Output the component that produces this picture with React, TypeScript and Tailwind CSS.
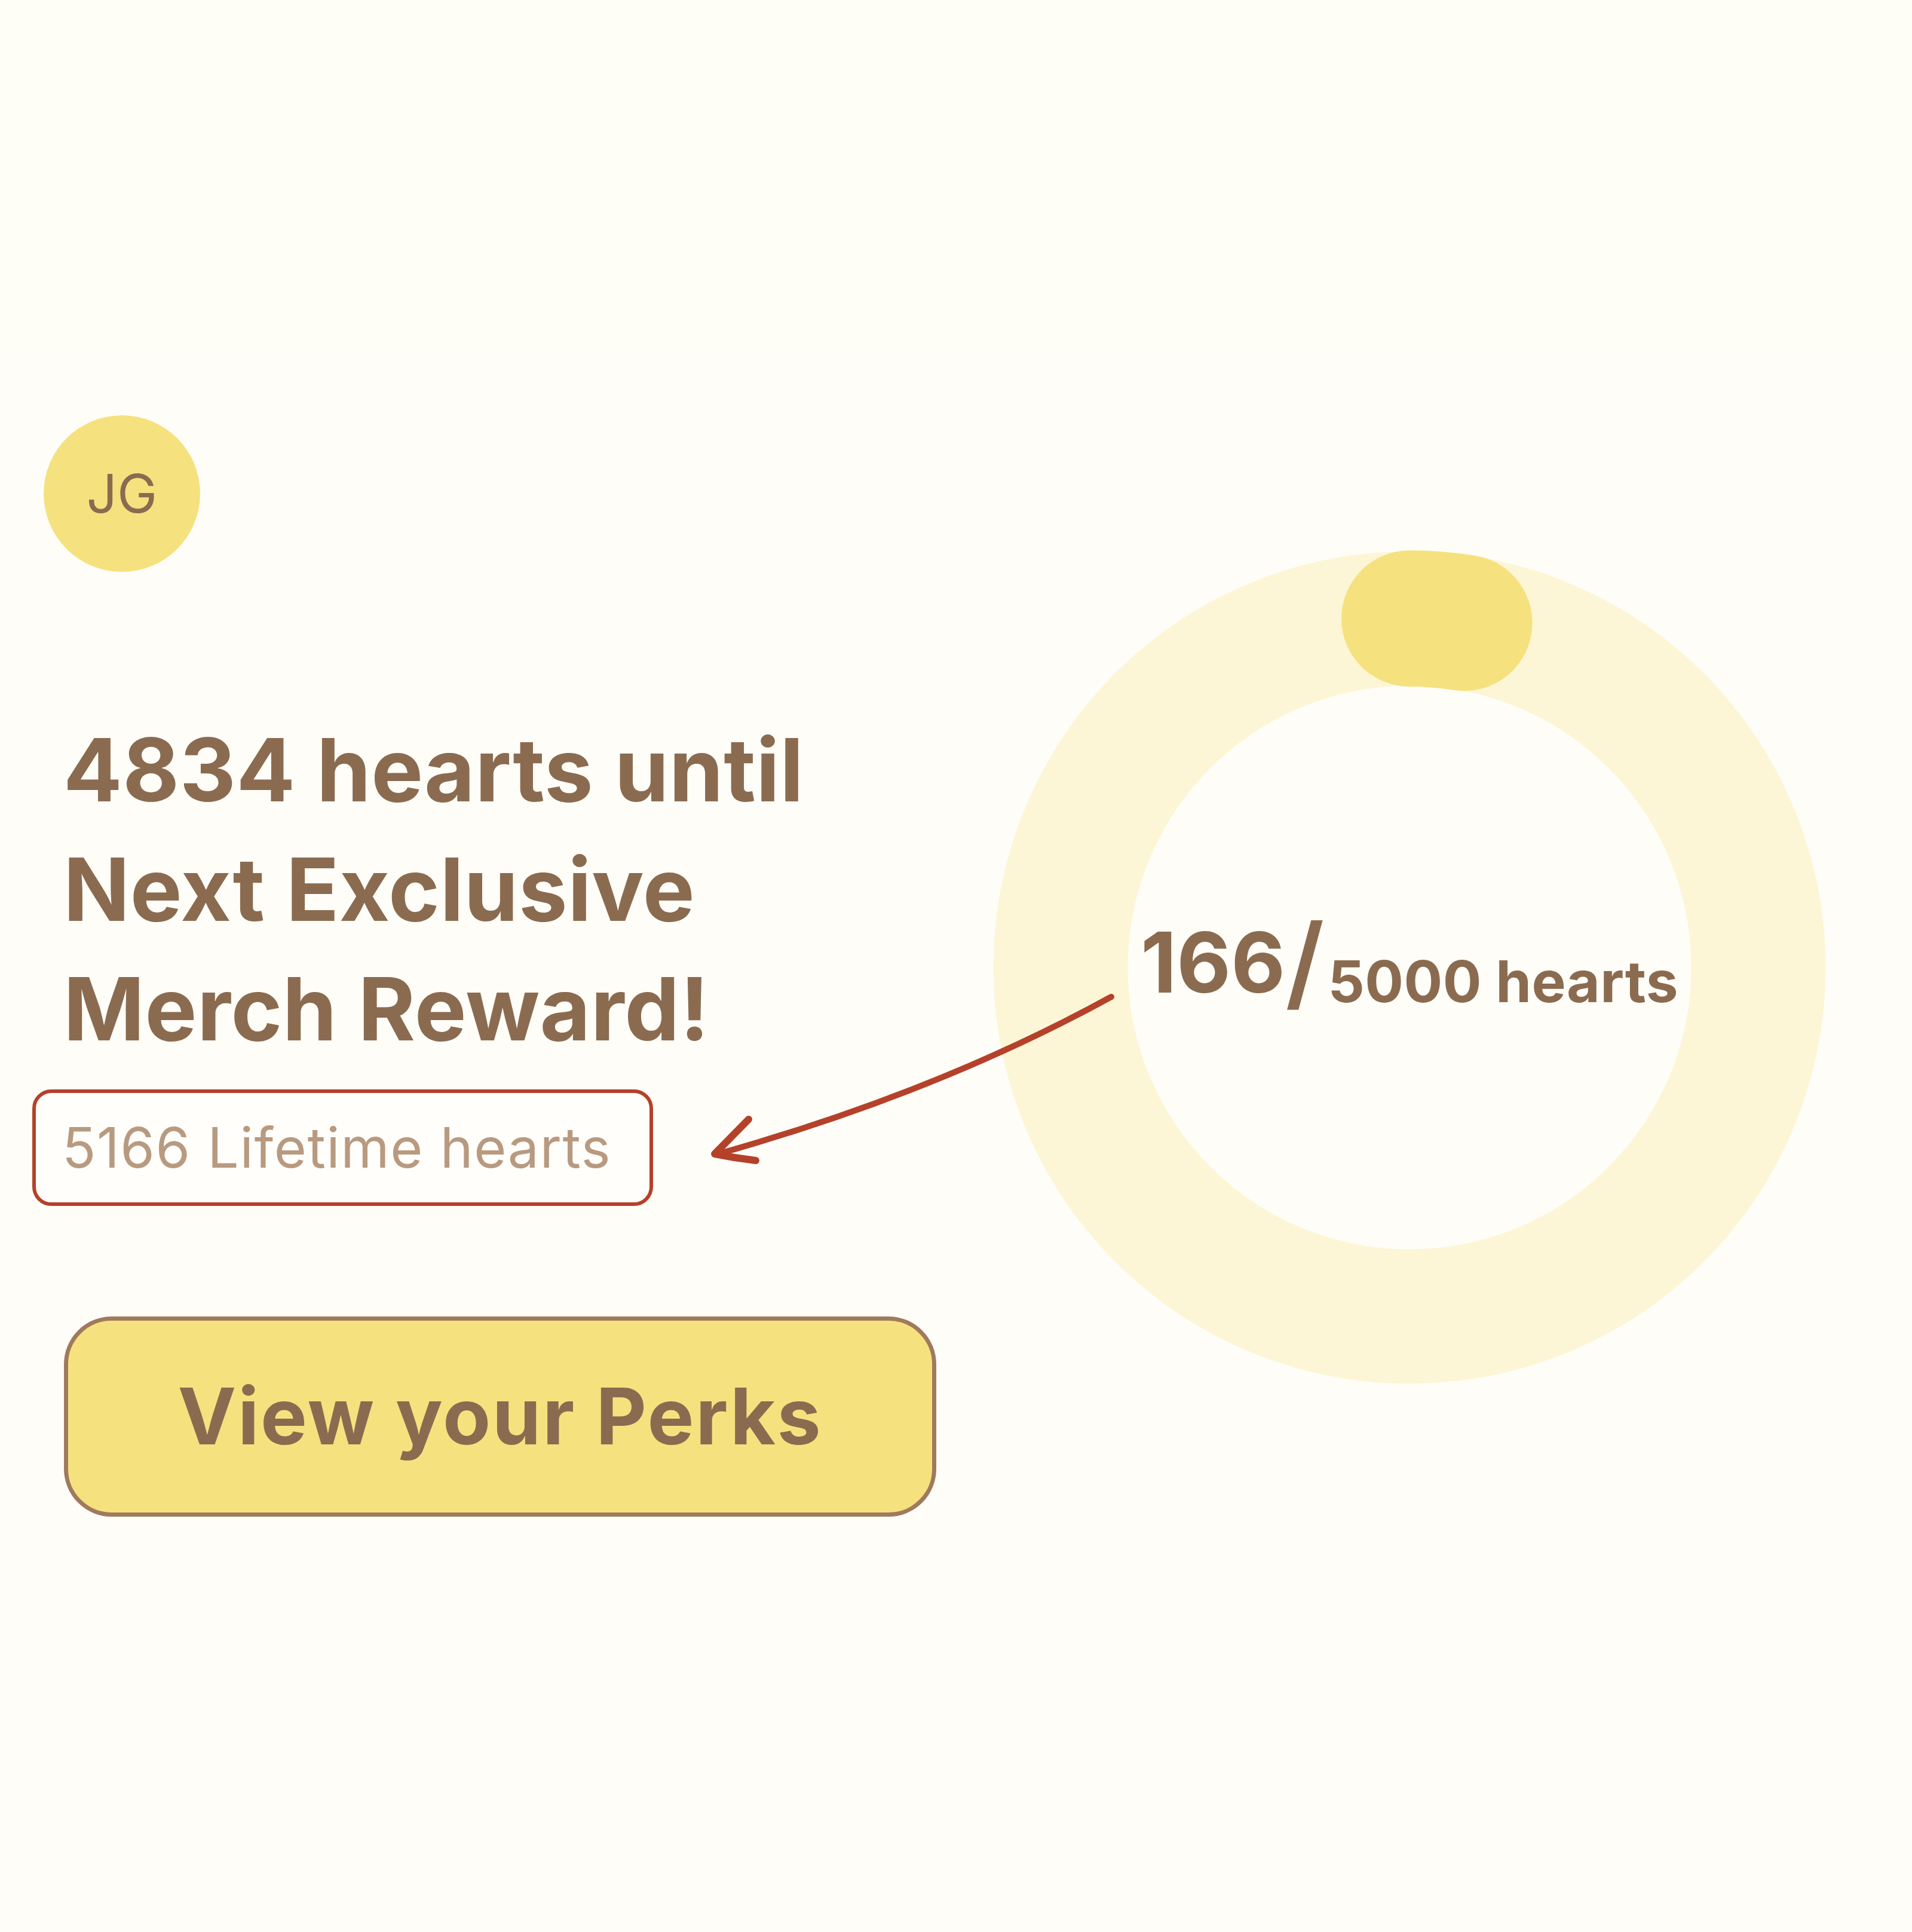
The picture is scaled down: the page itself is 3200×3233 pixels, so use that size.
import React from "react";

const R = 584;
const C = 2 * Math.PI * R;

export default function App() {
  return (
    <div
      className="relative w-[3200px] h-[3233px] bg-[#fffdf8] overflow-hidden"
      style={{ fontFamily: "Inter, 'Open Sans', sans-serif" }}
    >
      <div className="h-[590px] bg-[#fffef6]" />
      <div className="flex">
        {/* Left column */}
        <div className="w-[1659px] flex flex-col items-start pl-[54px] pt-[105px]">
          <div className="ml-[19px] w-[262px] h-[262px] rounded-full bg-[#f5e27f] flex items-center justify-center">
            <span className="text-[90px] text-[#8b6b50] font-normal leading-none tracking-[0px]">JG</span>
          </div>
          <h1 className="ml-[52px] mt-[231px] text-[146px] leading-[200px] font-bold text-[#8b6b50] tracking-[0.5px]">
            4834 hearts until
            <br />
            Next Exclusive
            <br />
            Merch Reward!
          </h1>
          <div className="mt-[35px] w-[1039px] h-[195px] rounded-[32px] border-[6px] border-[#b5412a] bg-[#fffefa] flex items-center pl-[44px]">
            <span className="text-[93px] text-[#b89a80] font-normal tracking-[1.5px]">5166 Lifetime hearts</span>
          </div>
          <button className="ml-[53px] mt-[185px] w-[1460px] h-[335px] rounded-[80px] border-[7px] border-[#a07a5e] bg-[#f5e27f] flex items-center justify-center">
            <span className="text-[131px] font-bold text-[#8b6b50] tracking-[2.5px]">View your Perks</span>
          </button>
        </div>
        {/* Right column: ring */}
        <div className="mt-[329px] grid w-[1400px] h-[1400px]">
          <svg width="1400" height="1400" viewBox="0 0 1400 1400" className="col-start-1 row-start-1">
            <circle cx="700" cy="700" r={R} fill="none" stroke="#fcf6d6" strokeWidth="225" />
            <circle
              cx="700"
              cy="700"
              r={R}
              fill="none"
              stroke="#f5e27f"
              strokeWidth="228"
              strokeLinecap="round"
              strokeDasharray={`92 ${C}`}
              transform="rotate(-90 700 700)"
            />
          </svg>
          <div className="col-start-1 row-start-1 flex items-center justify-center pb-[36px]">
            <div className="flex items-end font-bold text-[#8b6b50]">
              <span className="text-[140px] leading-none tracking-[0px]">166</span>
              <span className="text-[172px] leading-none font-semibold mb-[-14px]">/</span>
              <span className="ml-[6px] text-[96px] leading-none tracking-[0.5px] mb-[-10px]">5000 hearts</span>
            </div>
          </div>
        </div>
      </div>
      <svg
        className="absolute inset-0 pointer-events-none"
        width="3200"
        height="3233"
        viewBox="0 0 3200 3233"
      >
        <path d="M1860 1668 Q1569 1828 1198 1932" fill="none" stroke="#b5412a" strokeWidth="10" strokeLinecap="round" />
        <path d="M1253 1873 L1196 1931 Q1230 1938 1265 1942" fill="none" stroke="#b5412a" strokeWidth="12" strokeLinecap="round" strokeLinejoin="round" />
      </svg>
    </div>
  );
}
